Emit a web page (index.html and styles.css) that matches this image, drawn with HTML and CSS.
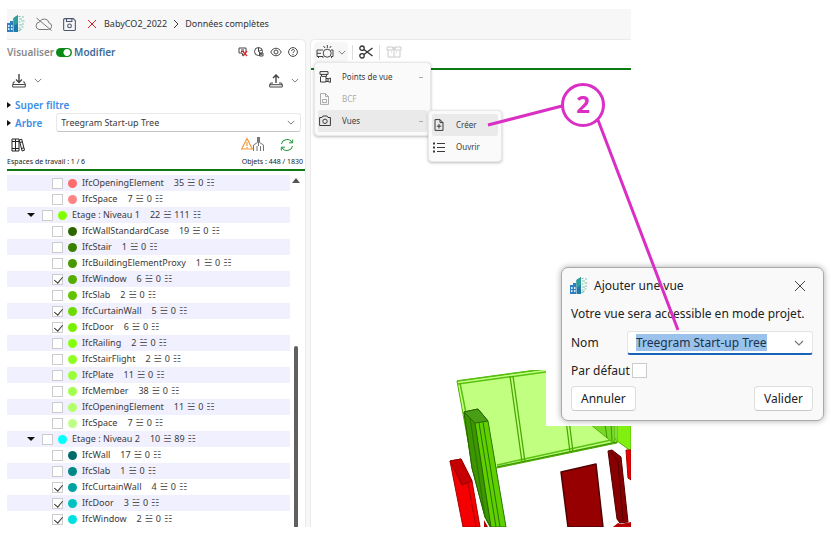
FILE: index.html
```
<!DOCTYPE html>
<html lang="fr">
<head>
<meta charset="utf-8">
<title>BabyCO2_2022 - Données complètes</title>
<link rel="stylesheet" href="styles.css">
</head>
<body>
<svg class="defs" aria-hidden="true">
  <symbol id="logo" viewBox="0 0 18 18">
    <path d="M0 8h3V6h3v11H0z" fill="#2f7fc0"/>
    <path d="M1 10h1.500v2H1zM4 10h1.500v2H4zM1 13h1.500v2H1zM4 13h1.500v2H4z" fill="#d5ecf8"/>
    <path d="M6.500 3L11 0v17H6.500z" fill="#1e78a8"/>
    <path d="M6.500 3L11 0v8l-4.500 3z" fill="#2f9f9c"/>
    <path d="M11.500 1.500h2M12 4h3M11.500 7h2M12 10h3M11.500 13h2M15 2h2M14.500 6h3M15 9h2M14.500 12h2M11.500 16l3-2" stroke="#79c6b0" stroke-width="1.200" fill="none"/>
  </symbol>
  <symbol id="chevron" viewBox="0 0 10 6"><path d="M1 1l4 4 4-4" fill="none" stroke="currentColor" stroke-width="1.200"/></symbol>
</svg>

<div class="app">
  <header class="topbar">
    <svg class="logo"><use href="#logo"/></svg>
    <button class="icon-btn cloud" aria-label="Hors ligne"><svg viewBox="0 0 18 14" width="18" height="14"><path d="M4 12.500h9.500a3.300 3.300 0 0 0 .6-6.500A5 5 0 0 0 4.600 5 3.800 3.800 0 0 0 4 12.500zM1.500 1l15 12.500"/></svg></button>
    <button class="icon-btn save" aria-label="Enregistrer"><svg viewBox="0 0 12 12" width="13" height="13"><path d="M1.500.6h8l1.900 1.900v8a1 1 0 0 1-1 1h-9a1 1 0 0 1-.8-1v-9a1 1 0 0 1 .9-.9zM3.200.8v2.400h5V.8"/><circle cx="6" cy="7.300" r="1.700"/></svg></button>
    <button class="icon-btn close-file" aria-label="Fermer"><svg viewBox="0 0 10 10" width="10" height="10"><path d="M1 1l8 8M9 1L1 9"/></svg></button>
    <nav class="crumbs" aria-label="Fil"><a href="#">BabyCO2_2022</a><svg viewBox="0 0 6 8" width="6" height="8"><path d="M1 0l4 4-4 4"/></svg><a href="#">Données complètes</a></nav>
  </header>

  <main class="work">
    <section class="panel">
      <div class="mode">
        <label for="mode" class="mode-off">Visualiser</label>
        <input id="mode" class="switch" type="checkbox" checked>
        <label for="mode" class="mode-on">Modifier</label>
        <div class="mode-tools">
          <button class="icon-btn" aria-label="Effacer la sélection"><svg viewBox="0 0 10 10" width="10" height="10"><path d="M1 1h7v4M1 1v5h3l1 3M3 3h3M3 4.500h3"/><path d="M4.500 4l4.500 5M9 4L5 9" stroke="#d8242f" stroke-width="1.300"/></svg></button>
          <button class="icon-btn" aria-label="Couleurs"><svg viewBox="0 0 10 10" width="10" height="10"><circle cx="4.500" cy="4.500" r="4"/><path d="M4.500.5v4l3 3M4.500 4.500L8 3M5.500 6h3.500v3H5.500z"/></svg></button>
          <button class="icon-btn" aria-label="Visibilité"><svg viewBox="0 0 12 10" width="12" height="10"><path d="M.8 5C3 0 9 0 11.200 5 9 10 3 10 .8 5z"/><circle cx="6" cy="5" r="2"/></svg></button>
          <button class="icon-btn" aria-label="Aide"><svg viewBox="0 0 10 10" width="10" height="10"><circle cx="5" cy="5" r="4.400"/><path d="M3.600 4c0-2 3-2 2.900-.2C6.400 5 5 4.800 5 6.200M5 7v1"/></svg></button>
        </div>
      </div>
      <div class="transfer">
        <button class="icon-btn" aria-label="Importer"><svg viewBox="0 0 14 14" width="14" height="14"><path d="M3 8H1.500L.7 11v2h12.600v-2L12.500 8H11M.7 10.500h12.600"/><path d="M7 0v8M4 5.500L7 8.500l3-3" stroke-width="1.400"/></svg></button>
        <button class="icon-btn" aria-label="Options d’import"><svg class="chev"><use href="#chevron"/></svg></button>
        <span class="push"></span>
        <button class="icon-btn" aria-label="Exporter"><svg viewBox="0 0 14 14" width="14" height="14"><path d="M4 9H1.500L.7 11v2h12.600v-2L12.500 9H10M.7 10.700h12.600"/><path d="M7 9V1M4 4l3-3 3 3" stroke-width="1.400"/></svg></button>
        <button class="icon-btn" aria-label="Options d’export"><svg class="chev"><use href="#chevron"/></svg></button>
      </div>
      <div class="filter"><button class="fold">Super filtre</button></div>
      <div class="filter tree-pick">
        <button class="fold">Arbre</button>
        <span class="select-wrap"><select aria-label="Arbre"><option>Treegram Start-up Tree</option></select><svg class="chev"><use href="#chevron"/></svg></span>
      </div>
      <div class="spaces">
        <button class="icon-btn library" aria-label="Espaces de travail"><svg viewBox="0 0 14 14" width="14" height="14"><path d="M1 1h3.500v12H1zM4.500 1H8v12H4.500zM8.300 2l2.400-.8 2.800 11-2.400.8zM1 3.500h7M1 10.500h7M9 4.500l2.300-.7M10.500 10.500l2.300-.7"/></svg></button>
        <span class="push"></span>
        <button class="icon-btn" aria-label="Alertes"><svg viewBox="0 0 24 15" width="24" height="15"><path d="M6 1.500L11.300 12H.7zM6 5v4M6 10v1.200" stroke="#f09a3a" stroke-width="1.200"/><path d="M12.500 14V8l4-2.500V0M18.500 0v5.500l4 2.500v6M16 14V9M19.500 14V9M17.500 0v9" stroke="#777"/></svg></button>
        <button class="icon-btn refresh" aria-label="Actualiser"><svg viewBox="0 0 14 12" width="14" height="12"><path d="M1.500 5A5.500 5 0 0 1 12 3.500M12.700.5v3.300H9M12.500 7A5.500 5 0 0 1 2 8.500M1.300 11.500V8.200H5"/></svg></button>
      </div>
      <div class="counts"><span>Espaces de travail : 1 / 6</span><span>Objets : 448 / 1830</span></div>
      <div class="tree-box">
        <ul class="tree" id="tree"></ul>
        <div class="scroll" aria-hidden="true"><i class="up"></i><i class="thumb"></i></div>
      </div>
    </section>

    <section class="viewer">
      <div class="toolbar">
        <button class="tool open" aria-label="Vues"><svg viewBox="0 0 18 14" width="18" height="14"><path d="M7 5H1v6.500h6M1 8.300h4M2.500 11.500V13M15 5h2v6.500h-2M9 3L7.500 1M11.300 3V0M13.700 3l1.500-2M7 11.500V13M15.500 11.500V13"/><circle cx="11.200" cy="8.200" r="4"/></svg><svg class="chev"><use href="#chevron"/></svg></button>
        <span class="sep"></span>
        <button class="tool" aria-label="Couper"><svg viewBox="0 0 14 14" width="14" height="14"><g stroke-width="1.300"><circle cx="3" cy="3.200" r="2.200"/><circle cx="3" cy="10.800" r="2.200"/><path d="M5 4.500L13.500 11M5 9.500L13.500 3"/></g></svg></button>
        <span class="sep"></span>
        <button class="tool off" disabled aria-label="Boîte"><svg viewBox="0 0 16 12" width="16" height="12"><path d="M1 1h6v3H1zM9 1h6v3H9zM2 4v7h12V4M7 1l1 2 1-2M8 3v8M5 6h1M10 6h1"/></svg></button>
      </div>
      <div class="menu">
        <button><svg viewBox="0 0 12 12" width="12" height="12"><path d="M1 .6h8v2.800H1zM2.500 3.400v2h5v-2M1.500 5.500v5.500h5.500V5.500M7 7.500h2v3H7M9 8l2.400-1v4.400L9 10.500"/></svg><span>Points de vue</span><i></i></button>
        <button disabled><svg viewBox="0 0 12 12" width="12" height="12"><path d="M1.500.6h5l3 3v7.800h-8zM6.500.6v3h3M3.500 6.500h4v3h-4z"/></svg><span>BCF</span></button>
        <button class="hot"><svg viewBox="0 0 12 12" width="12" height="12"><path d="M.6 2.500H3L4 1h4l1 1.500h2.400v8H.6z"/><circle cx="6" cy="6.300" r="2.200"/></svg><span>Vues</span><i></i></button>
      </div>
      <div class="menu submenu">
        <button class="hot"><svg viewBox="0 0 12 12" width="12" height="12"><path d="M2 .6h5l3 3v7.800H2zM7 .6v3h3M6 5v4.500M3.800 7.200h4.500"/></svg><span>Créer</span></button>
        <button><svg viewBox="0 0 12 12" width="12" height="12"><path d="M4 2.500h8M4 6.500h8M4 10.500h8"/><path d="M0 2.500h2M0 6.500h2M0 10.500h2" stroke-width="2"/></svg><span>Ouvrir</span></button>
      </div>
      <svg class="scene" viewBox="0 0 191 157" role="img" aria-label="Maquette 3D">
        <g stroke-linejoin="round">
          <path d="M17 11L120-3l60 40-3 36L57 98 34 104z" fill="#c0ff80" stroke="#4fae00"/>
          <path d="M17 11L120-3M18 14L120 0M20 13l12 60M57 95l119-26" fill="none" stroke="#58c010" stroke-width="1.500"/>
          <path d="M57 97l120-25" fill="none" stroke="#3f9a00" stroke-width="1.500"/>
          <path d="M70 6l12 86M73 6l12 86M126 50l4 32M129 50l4 32" fill="none" stroke="#48a800" stroke-width="1.300"/>
          <path d="M150 54h25v17l-3 1z" fill="#78da28" stroke="#55b400"/>
          <path d="M165 54l2 14M171 54l1 17" stroke="#3e9800" fill="none"/>
          <path d="M177 54h14v27l-14-10z" fill="#80f010" stroke="#55b400"/>
          <path d="M24 42l14-3 10 12 18 106H50L45 147 32 98z" fill="#60d000" stroke="#277500"/>
          <path d="M24 42l11 11 16 104-6-10-13-49z" fill="#3d9500" stroke="#276500"/>
          <path d="M24 42l14-3 10 12-13 2z" fill="#4a9e16" stroke="#276500"/>
          <path d="M30 48l15 99M39 53l17 104M43 52l17 105" fill="none" stroke="#277500"/>
          <path d="M10 91l11-2 11 22 8 46H23z" fill="#f40000" stroke="#a80000"/>
          <path d="M10 91l11-2 11 22-10 4z" fill="#c40000" stroke="#980000"/>
          <path d="M28 113l8 44" stroke="#a80000"/>
          <path d="M44 150l4 7h-4z" fill="#b00000"/>
          <path d="M121 102l35-8 7 63h-35z" fill="#960000" stroke="#500000" stroke-width="1.500"/>
          <path d="M186 80h5v30l-3-2z" fill="#ec0000" stroke="#a80000"/>
          <path d="M168 81l4-1 9 7 7 65-8 1-3-4z" fill="#880000" stroke="#500000"/>
          <path d="M171 82l7 9 5 60" fill="none" stroke="#500000"/>
          <path d="M173 157l5-4 3 1 10-2v5z" fill="#b80000"/>
        </g>
      </svg>
    </section>
  </main>
</div>

<div class="dialog-back">
  <form class="dialog" role="dialog" aria-labelledby="dlg-title">
    <div class="dialog-head">
      <svg class="logo"><use href="#logo"/></svg>
      <h2 id="dlg-title">Ajouter une vue</h2>
      <button type="button" class="icon-btn" aria-label="Fermer la fenêtre"><svg viewBox="0 0 12 12" width="12" height="12"><path d="M1 1l10 10M11 1L1 11"/></svg></button>
    </div>
    <p>Votre vue sera accessible en mode projet.</p>
    <div class="field">
      <label for="name">Nom</label>
      <span class="combo"><input id="name" type="text" value="Treegram Start-up Tree"><svg class="chev"><use href="#chevron"/></svg></span>
    </div>
    <div class="default"><label for="def">Par défaut</label><input id="def" type="checkbox" class="box"></div>
    <div class="actions"><button type="button">Annuler</button><button type="button">Valider</button></div>
  </form>
</div>

<svg class="callout" viewBox="0 0 200 256" width="200" height="256">
  <g fill="none" stroke="#d92fc4" stroke-width="3">
    <path d="M8 45l74-19M118 40l80 210"/>
    <circle cx="103" cy="25" r="20.500" fill="#fff"/>
  </g>
  <text x="103" y="33" text-anchor="middle">2</text>
</svg>
<script src="tree.js"></script>
</body>
</html>
```
FILE: styles.css
```
* { box-sizing: border-box; }
body {
  position: relative;
  margin: 0;
  background: #fff;
  color: #3a3a3a;
  font: 9px/16px "Noto Sans", "Open Sans", sans-serif;
}
button, input, select { font: inherit; color: inherit; margin: 0; }
button { border: 0; padding: 0; background: none; }
svg { flex: none; fill: none; stroke: currentColor; stroke-width: 1; }
.defs { position: absolute; width: 0; height: 0; }
.logo { width: 18px; height: 18px; stroke: none; }
.chev { width: 8px; height: 5px; color: #777; }
.icon-btn { display: flex; color: #444; }
.push { flex: 1; }

.app { margin: 9px 207px 18px 7px; background: #f7f7f7; }
.topbar { display: flex; align-items: center; height: 30px; }
.cloud { margin-left: 10px; color: #777; }
.save { margin-left: 10px; color: #4c5570; }
.close-file { margin-left: 11px; color: #e02020; }
.crumbs { display: flex; align-items: center; gap: 6px; margin-left: 7px; }
.crumbs a { color: #333; text-decoration: none; }

.work { display: flex; gap: 4px; }
.panel {
  flex: none;
  width: 299px;
  background: #fff;
  border: solid #eaeaea;
  border-width: 1px 1px 0 0;
  border-radius: 0 5px 0 0;
}
.mode { display: flex; align-items: center; gap: 2px; height: 24px; font-size: 10px; font-weight: 600; padding-right: 7px; }
.mode-off { color: #8a8a8a; }
.mode-on { color: #3c6c98; }
.mode-tools { display: flex; align-items: center; gap: 6px; margin-left: auto; }
.switch {
  appearance: none;
  width: 16px;
  height: 9px;
  border-radius: 5px;
  background: radial-gradient(circle at 11px 50%, #fff 3px, #0a8a14 4px);
}
.transfer { display: flex; align-items: center; gap: 8px; height: 33px; padding: 0 6px 0 5px; }
.filter { display: flex; align-items: center; height: 16px; }
.fold { display: flex; align-items: center; gap: 4px; color: #3a8ee6; font-size: 10px; font-weight: 600; }
.fold::before { content: ""; border: solid transparent; border-width: 3px 0 3px 4px; border-left-color: #111; }
.tree-pick { height: 19px; gap: 14px; padding-right: 4px; }
.select-wrap { position: relative; flex: 1; display: flex; }
.select-wrap select {
  appearance: none;
  flex: 1;
  height: 19px;
  padding: 0 4px;
  border: 1px solid #e8e8e8;
  border-bottom-color: #c4c4c4;
  border-radius: 3px;
  background: #fff;
}
.select-wrap .chev { position: absolute; right: 6px; top: 7px; }
.spaces { display: flex; align-items: center; gap: 15px; height: 25px; padding: 0 11px 0 4px; }
.spaces .library { color: #222; }
.spaces .refresh { color: #1b9434; }
.counts { display: flex; justify-content: space-between; height: 14px; padding-right: 2px; font-size: 7px; line-height: 10px; border-bottom: 2px solid #0d7a14; color: #222; margin-bottom: 4px; }
.tree-box { display: flex; }
.tree { flex: 1; list-style: none; margin: 0; padding: 0; }
.tree li { display: flex; align-items: center; height: 16px; padding-left: 45px; white-space: nowrap; }
.tree li:nth-child(odd) { background: #f0f0ff; }
.tree .group { padding-left: 20px; }
.twist { border: solid transparent; border-width: 4px 4px 0; border-top-color: #111; margin-right: 7px; }
.box { appearance: none; width: 11px; height: 11px; border: 1px solid #ccc; background: #fff; }
.tree .box { position: relative; }
.tree .box:checked::after { content: ""; position: absolute; left: 3px; top: 0; width: 4px; height: 7px; border: solid #333; border-width: 0 1px 1px 0; transform: rotate(40deg); }
.dot { width: 9px; height: 9px; border-radius: 50%; margin: 0 5px; }
.num { display: flex; gap: 3px; margin-left: 10px; }
.sym { font-family: "DejaVu Sans", sans-serif; color: #555; }
.scroll { width: 15px; display: flex; flex-direction: column; align-items: center; padding-right: 4px; }
.up { border: solid transparent; border-width: 0 4px 5px; border-bottom-color: #555; margin-top: 3px; }
.thumb { width: 4px; flex: 1; margin-top: 163px; background: #606060; border-radius: 2px 2px 0 0; }

.viewer {
  position: relative;
  flex: 1;
  display: flex;
  flex-direction: column;
  background: #fff;
  border: solid #eaeaea;
  border-width: 1px 0 0 1px;
  border-radius: 5px 0 0 0;
}
.toolbar { display: flex; align-items: center; gap: 4px; height: 30px; padding: 0 0 4px 3px; border-bottom: 2px solid #0d7a14; }
.tool { display: flex; align-items: center; gap: 4px; color: #333; padding: 3px 2px; border-radius: 3px; }
.tool.open { background: #f7f7f7; color: #444; }
.tool.off { color: #ccc; }
.sep { width: 1px; height: 15px; background: #ddd; }
.menu {
  position: absolute;
  left: 3px;
  top: 22px;
  width: 117px;
  padding: 3px;
  background: #fafafa;
  border: 1px solid #e8e8e8;
  border-radius: 4px;
  box-shadow: 0 1px 3px #0004;
}
.submenu { left: 117px; top: 70px; width: 74px; }
.menu button { display: flex; align-items: center; width: 100%; height: 22px; padding: 0 4px 0 1px; font-size: 8px; border-radius: 2px; }
.menu button span { margin-left: 11px; }
.menu button i { margin-left: auto; width: 4px; height: 1px; background: #aaa; }
.menu button:disabled { color: #aaa; }
.menu .hot { background: #eaeaea; }
.scene { width: 191px; margin: auto 0 0 auto; height: 157px; stroke: none; }

.dialog-back { position: absolute; right: 0; top: 248px; width: 292px; padding: 19px 14px 5px 15px; background: #fff; }
.dialog {
  display: flex;
  flex-direction: column;
  padding: 6px 10px 9px 9px;
  font-size: 12px;
  color: #222;
  background: #f9f9f9;
  border: 1px solid #aaa;
  border-radius: 7px;
  box-shadow: 0 0 6px #0005;
}
.dialog-head { display: flex; align-items: center; height: 24px; gap: 6px; }
.dialog-head .logo { margin-left: -1px; }
.dialog h2 { margin: 0; font: inherit; flex: 1; }
.dialog-head .icon-btn { margin-right: 7px; }
.dialog p { margin: 8px 0 9px; }
.field, .default { display: flex; align-items: center; }
.field { justify-content: space-between; }
.combo { position: relative; display: flex; width: 186px; }
.combo input { width: 100%; height: 24px; padding: 0 8px; border: 1px solid #e4e4e4; border-bottom: 2px solid #1a62b7; border-radius: 3px; background: #fff; outline: none; }
.combo input::selection { background: #9ac2ea; color: #17324f; }
.combo .chev { position: absolute; right: 9px; top: 9px; width: 10px; height: 6px; }
.default { gap: 2px; height: 31px; }
.default .box { width: 15px; height: 15px; }
.actions { display: flex; justify-content: space-between; }
.actions button { height: 25px; padding: 0 9px; background: #fff; border: 1px solid #ddd; border-bottom-color: #c8c8c8; border-radius: 4px; }

.callout { position: absolute; left: 480px; top: 80px; pointer-events: none; }
.callout text { fill: #d92fc4; stroke: none; font: bold 24px "Noto Sans", sans-serif; }
```
FILE: tree.js
```
const rows = [
  ["IfcOpeningElement", 35, 0, "#ff6b6b"],
  ["IfcSpace", 7, 0, "#ff8585"],
  ["Etage : Niveau 1", 22, 111, "#80ff00", "group"],
  ["IfcWallStandardCase", 19, 0, "#2d6600"],
  ["IfcStair", 1, 0, "#3a8000"],
  ["IfcBuildingElementProxy", 1, 0, "#489900"],
  ["IfcWindow", 6, 0, "#54ad00", "on"],
  ["IfcSlab", 2, 0, "#60c400"],
  ["IfcCurtainWall", 5, 0, "#6bdb00", "on"],
  ["IfcDoor", 6, 0, "#78f000", "on"],
  ["IfcRailing", 2, 0, "#86ff0d"],
  ["IfcStairFlight", 2, 0, "#90ff22"],
  ["IfcPlate", 11, 0, "#99ff38"],
  ["IfcMember", 38, 0, "#a5ff50"],
  ["IfcOpeningElement", 11, 0, "#b3ff6b"],
  ["IfcSpace", 7, 0, "#bfff85"],
  ["Etage : Niveau 2", 10, 89, "#00ffff", "group"],
  ["IfcWall", 17, 0, "#006b6b"],
  ["IfcSlab", 1, 0, "#008787"],
  ["IfcCurtainWall", 4, 0, "#00a3a3", "on"],
  ["IfcDoor", 3, 0, "#00c2c2", "on"],
  ["IfcWindow", 2, 0, "#00e0e0", "on"]
];
document.getElementById("tree").innerHTML = rows.map(([name, a, b, color, kind], i) =>
  `<li class="${kind === "group" ? "group" : "leaf"}">${kind === "group" ? '<i class="twist"></i>' : ""}` +
  `<input type="checkbox" class="box" id="n${i}"${kind === "on" ? " checked" : ""}>` +
  `<i class="dot" style="background:${color}"></i><label for="n${i}">${name}</label>` +
  `<span class="num"><span>${a}</span><span class="sym">☱</span><span>${b}</span><span class="sym">☷</span></span></li>`).join("");
const field = document.getElementById("name");
field.focus();
field.select();
```
